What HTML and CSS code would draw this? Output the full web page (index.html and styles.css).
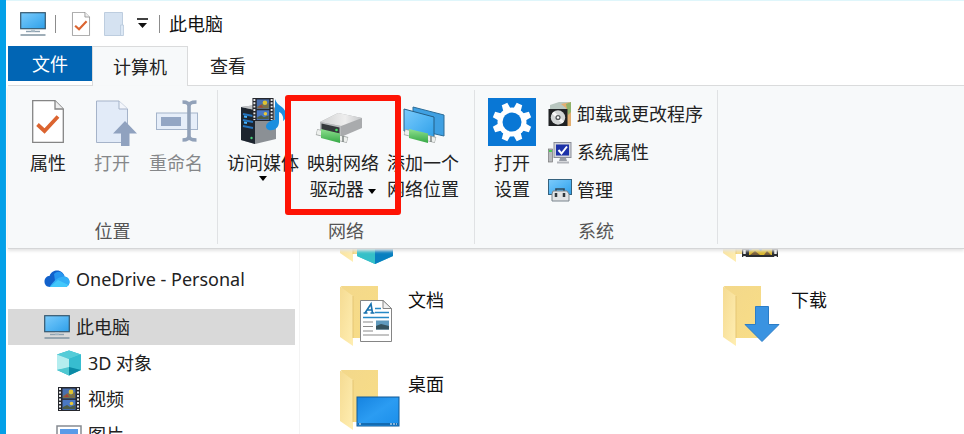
FILE: index.html
```
<!DOCTYPE html>
<html lang="zh-CN">
<head>
<meta charset="UTF-8">
<meta name="viewport" content="width=device-width, initial-scale=1.0">
<title>此电脑</title>
<link rel="stylesheet" href="styles.css">
</head>
<body>

<!-- Shared icon shapes -->
<svg class="defs" aria-hidden="true">
    <defs>
        <linearGradient id="screen" x1="0" y1="0" x2="1" y2="1">
            <stop offset="0" stop-color="#7ccbfb"/>
            <stop offset="0.5" stop-color="#54b6f4"/>
            <stop offset="1" stop-color="#2f9fe8"/>
        </linearGradient>
        <linearGradient id="folderBack" x1="0" y1="0" x2="1" y2="1">
            <stop offset="0" stop-color="#f3d88b"/>
            <stop offset="1" stop-color="#f8dd86"/>
        </linearGradient>
        <linearGradient id="folderFront" x1="0" y1="0" x2="1" y2="1">
            <stop offset="0" stop-color="#f5db92"/>
            <stop offset="1" stop-color="#ffeeb2"/>
        </linearGradient>
        <linearGradient id="desk" x1="0" y1="0" x2="1" y2="1">
            <stop offset="0" stop-color="#1683e0"/>
            <stop offset="0.5" stop-color="#2b9cf2"/>
            <stop offset="1" stop-color="#1a8eea"/>
        </linearGradient>
        <linearGradient id="metal" x1="0" y1="0" x2="1" y2="0">
            <stop offset="0" stop-color="#d0d1d1"/>
            <stop offset="0.6" stop-color="#eeeeee"/>
            <stop offset="1" stop-color="#c4c6c8"/>
        </linearGradient>
        <linearGradient id="cable" x1="0" y1="0" x2="0" y2="1">
            <stop offset="0" stop-color="#8fe08f"/>
            <stop offset="1" stop-color="#35a845"/>
        </linearGradient>
        <symbol id="pc" viewBox="0 0 26 24">
            <rect x="0.7" y="0.7" width="24.6" height="16" fill="url(#screen)" stroke="#35586f" stroke-width="1.2"/>
            <path d="M6 19.5h14" stroke="#8da1b0" stroke-width="1.4"/>
            <path d="M11 17.5h4v2h-4z" fill="#b4c4ce"/>
            <path d="M0.5 23h25" stroke="#7f93a1" stroke-width="1.5"/>
        </symbol>
        <symbol id="cube" viewBox="0 0 26 26">
            <path d="M13 0.5L25 4.5V20L13 25.5L1 20V4.5z" fill="#29b3c6"/>
            <path d="M13 0.5L25 4.5L13 9L1 4.5z" fill="#55ccd8"/>
            <path d="M1 4.5L13 9V18L1 20z" fill="#b4edef"/>
            <path d="M25 4.5L13 9V18L25 20z" fill="#37bdd0"/>
            <path d="M1 20L13 17V25.5z" fill="#4fc8d1"/>
            <path d="M25 20L13 17V25.5z" fill="#0b8ba6"/>
        </symbol>
        <symbol id="film" viewBox="0 0 22 24">
            <rect width="22" height="24" fill="#25272d"/>
            <path d="M2 1v22M20 1v22" stroke="#e6e7e9" stroke-width="2" stroke-dasharray="2 1.5"/>
            <rect x="4.5" y="1.5" width="13" height="10" fill="#496fae"/>
            <rect x="4.5" y="12.8" width="13" height="10" fill="#4a78c4"/>
            <path d="M5 9l5-3 3 2 4-3v6H5z" fill="#7a7048"/>
            <circle cx="13" cy="5" r="2.4" fill="#e0c32f"/>
            <path d="M6 10l3-3 2 3z" fill="#a6413c"/>
            <path d="M5 20l4-2 3 2 5-2v4H5z" fill="#4c5c46"/>
            <circle cx="13.5" cy="16.5" r="1.8" fill="#e8c93a"/>
        </symbol>
        <symbol id="folder" viewBox="0 0 38 60">
            <path d="M1 0h37v52H13z" fill="url(#folderBack)"/>
            <path d="M0 0.5L13 10V60L0 51z" fill="url(#folderFront)"/>
            <path d="M13 10V52" stroke="#e5c674"/>
        </symbol>
        <symbol id="sheet" viewBox="0 0 32 43">
            <path d="M0.7 0.7H23L31.3 9V42.3H0.7z" fill="#fff" stroke="#858585" stroke-width="1.3"/>
            <path d="M23 0.7V9H31.3" fill="#eee" stroke="#858585" stroke-width="1.3"/>
            <path d="M5.5 24.5L12.5 31L26 16.5" fill="none" stroke="#db6430" stroke-width="3.8"/>
        </symbol>
        <symbol id="plug" viewBox="0 0 34 16">
            <path d="M1.5 4L32.5 12" stroke="#a3a8a6" stroke-width="6"/>
            <path d="M2 4L32 12" stroke="#edf0ed" stroke-width="4.500"/>
            <path d="M6 1L25 5.500V15L6 10z" fill="url(#cable)"/>
            <path d="M28 8v6" stroke="#7e8683" stroke-width="1.5"/>
        </symbol>
    </defs>
</svg>

<div class="window">
    <header class="titlebar">
        <svg class="icon-pc" aria-hidden="true"><use href="#pc"/></svg>
        <span class="separator"></span>
        <button type="button" class="quick" aria-label="属性">
            <svg class="icon-sheet" aria-hidden="true"><use href="#sheet"/></svg>
        </button>
        <button type="button" class="quick" aria-label="新建文件夹">
            <svg width="20" height="24" viewBox="0 0 20 24" aria-hidden="true">
                <path d="M0.5 0.5H18.5V23.5H0.5z" fill="#d5e2f1" stroke="#bdcddf"/>
                <path d="M16.5 13h3v10.5h-3z" fill="#dce8f5" stroke="#b9c9dc" stroke-width="0.8"/>
            </svg>
        </button>
        <button type="button" class="quick" aria-label="自定义快速访问工具栏">
            <svg width="11" height="11" viewBox="0 0 11 11" aria-hidden="true">
                <path d="M0 1h11" stroke="#111" stroke-width="1.6"/>
                <path d="M1 5h9L5.5 10z" fill="#111"/>
            </svg>
        </button>
        <span class="separator"></span>
        <h1>此电脑</h1>
    </header>

    <nav class="tabs">
        <button type="button" class="tab file">文件</button>
        <button type="button" class="tab active">计算机</button>
        <button type="button" class="tab">查看</button>
    </nav>

    <div class="ribbon">
        <section class="group location">
            <div class="tools">
                <button type="button" class="tool">
                    <svg width="32" height="48" viewBox="0 0 32 48" aria-hidden="true"><use href="#sheet" y="2" width="32" height="43"/></svg>
                    <span>属性</span>
                </button>
                <button type="button" class="tool" disabled>
                    <svg width="42" height="48" viewBox="0 0 42 48" aria-hidden="true">
                        <path d="M5.5 3H28L36.500 11V44.5H5.5z" fill="#e2ebf8" stroke="#a5b3c9"/>
                        <path d="M28 3V11H36.5" fill="#f3f6fb" stroke="#a5b3c9"/>
                        <path d="M34 23L46 35.5H38.500V48H30V35.5H22z" fill="#90a2bf"/>
                    </svg>
                    <span>打开</span>
                </button>
                <button type="button" class="tool" disabled>
                    <svg width="44" height="48" viewBox="0 0 44 48" aria-hidden="true">
                        <rect x="2.5" y="15" width="41" height="16.5" fill="#e6eef9" stroke="#a4b4ca"/>
                        <rect x="7" y="19" width="20" height="9" fill="#93a6c4"/>
                        <path d="M28.5 4C32 4 35 5 35 8V38C35 41 32 42 28.5 42M42.5 4C39 4 35 5 35 8M35 38C35 41 39 42 42.5 42" fill="none" stroke="#92a2b9" stroke-width="3.6"/>
                    </svg>
                    <span>重命名</span>
                </button>
            </div>
            <h2>位置</h2>
        </section>

        <section class="group network">
            <div class="tools">
                <button type="button" class="tool">
                    <svg width="48" height="48" viewBox="0 0 48 48" aria-hidden="true">
                        <path d="M2 9L24 6L37 10V41L16 46L2 42z" fill="#8b9095"/>
                        <path d="M2 9L16 12V46L2 42z" fill="#1d252f"/>
                        <path d="M2 9L24 6L37 10L16 12z" fill="#c0c3c6"/>
                        <path d="M4 16L14 18M4 22L14 24M4 28L14 30" stroke="#2473bd" stroke-width="2"/>
                        <path d="M5 18.5l3 0.5M5 24.5l3 0.5" stroke="#47b4ff" stroke-width="2"/>
                        <circle cx="12.5" cy="40" r="1.2" fill="#48cf78"/>
                        <use href="#film" x="13" y="0" width="22" height="23"/>
                        <path d="M36 1C38 8 45 8 47 15C48 19 45 23 44 23C45 19 43 15 40 14V24C40 30 35 33 30 32C26 31 26 26 30 24C32 22 34 22 36 22z" fill="#1b8edf"/>
                    </svg>
                    <span>访问媒体</span>
                    <svg class="caret" viewBox="0 0 8 5" aria-hidden="true"><path d="M0 0h8L4 5z"/></svg>
                </button>
                <button type="button" class="tool highlighted">
                    <svg width="48" height="48" viewBox="0 0 48 48" aria-hidden="true">
                        <path d="M1 24L19 15L43 20V30L22 39L1 32z" fill="#a9abad"/>
                        <path d="M1 24L19 15L43 20L22 28z" fill="url(#metal)"/>
                        <path d="M1 24L22 28V38L1 33z" fill="#b9bbbd"/>
                        <path d="M2.500 25.500L20.500 29.5V36L2.500 32z" fill="#35393b"/>
                        <circle cx="17.5" cy="32" r="1.3" fill="#43df61"/>
                        <use href="#plug" x="-4" y="30" width="34" height="16"/>
                    </svg>
                    <span>映射网络<br>驱动器 <svg class="caret" viewBox="0 0 8 5" aria-hidden="true"><path d="M0 0h8L4 5z"/></svg></span>
                </button>
                <button type="button" class="tool">
                    <svg width="48" height="48" viewBox="0 0 48 48" aria-hidden="true">
                        <path d="M14 9L45 17V38L14 31z" fill="#3fa0e2" stroke="#2d6d97"/>
                        <path d="M5 11L35 19V40L5 33z" fill="url(#screen)" stroke="#245e85"/>
                        <use href="#plug" x="4" y="30" width="34" height="16"/>
                    </svg>
                    <span>添加一个<br>网络位置</span>
                </button>
            </div>
            <h2>网络</h2>
        </section>

        <section class="group system">
            <div class="tools">
                <button type="button" class="tool narrow">
                    <svg width="48" height="48" viewBox="0 0 48 48" aria-hidden="true">
                        <rect width="48" height="48" fill="#0977d5"/>
                        <g transform="translate(24 24)" fill="#fff">
                            <g id="teeth">
                                <path id="tooth" d="M-4 -12L-3 -19.5H3L4 -12z" transform="rotate(22.5)"/>
                                <use href="#tooth" transform="rotate(45)"/>
                                <use href="#tooth" transform="rotate(90)"/>
                                <use href="#tooth" transform="rotate(135)"/>
                            </g>
                            <use href="#teeth" transform="rotate(180)"/>
                            <circle r="14.5"/>
                            <circle r="9.5" fill="#0977d5"/>
                        </g>
                    </svg>
                    <span>打开<br>设置</span>
                </button>
                <ul class="commands">
                    <li>
                        <button type="button">
                            <svg width="24" height="26" viewBox="0 0 24 26" aria-hidden="true">
                                <path d="M2 4L11 1H21V8H2z" fill="#b9c7c0"/>
                                <path d="M13 3L23 1V25H18V7z" fill="#e3ae70"/>
                                <path d="M18 3l5-2v10l-3 3z" fill="#8fb26b"/>
                                <rect x="0.5" y="8" width="19" height="17" fill="#202224"/>
                                <circle cx="10" cy="16.5" r="7.2" fill="#d3d6d6"/>
                                <path d="M10 16.5L5 11.5M10 16.5L15 21.5" stroke="#f7f7f7" stroke-width="3"/>
                                <circle cx="10" cy="16.5" r="2.6" fill="#55595b"/>
                                <circle cx="10" cy="16.5" r="1.2" fill="#fff"/>
                            </svg>
                            卸载或更改程序
                        </button>
                    </li>
                    <li>
                        <button type="button">
                            <svg width="24" height="26" viewBox="0 0 24 26" aria-hidden="true">
                                <rect x="0.5" y="10" width="4" height="13" fill="#b8bbbe" stroke="#777" stroke-width="0.7"/>
                                <path d="M1 12h3" stroke="#4bcc54" stroke-width="2"/>
                                <rect x="6" y="3.5" width="17" height="15" fill="#d2d4da" stroke="#8b8f99"/>
                                <rect x="8" y="5.5" width="13" height="11" fill="#1d32a8"/>
                                <path d="M10.5 11l3 3.5L19 7.5" fill="none" stroke="#fff" stroke-width="2"/>
                                <path d="M12 19h6l1 3H11z" fill="#999da5"/>
                                <path d="M9 23.5h12" stroke="#b2b5bb" stroke-width="2"/>
                            </svg>
                            系统属性
                        </button>
                    </li>
                    <li>
                        <button type="button">
                            <svg width="24" height="26" viewBox="0 0 24 26" aria-hidden="true">
                                <rect x="0.5" y="2.5" width="23" height="15" fill="url(#screen)" stroke="#35627e"/>
                                <path d="M8 14v-2h8v2" fill="none" stroke="#30495b" stroke-width="1.6"/>
                                <path d="M5 14H19L21 17V24H4V17z" fill="#e1e4e6" stroke="#7b858d"/>
                                <path d="M8 16v4M16 16v4" stroke="#31383e" stroke-width="2.5"/>
                            </svg>
                            管理
                        </button>
                    </li>
                </ul>
            </div>
            <h2>系统</h2>
        </section>
    </div>

    <div class="content">
        <nav class="sidebar">
            <a href="#onedrive" class="onedrive">
                <svg width="26" height="26" viewBox="0 0 26 26" aria-hidden="true">
                    <path d="M6 21C2 21 0.5 18 0.5 15.5C0.5 12 3 10 5.5 10C7 6 10 4.5 13 4.5C17 4.5 19.5 7 20.5 10L10 21z" fill="#1261cb"/>
                    <path d="M10 8C14 4 19 6 20.5 10.5C24 11 25.5 13.5 25.5 16C25.5 19 23 21 20.5 21H12z" fill="#2796ef"/>
                    <path d="M5.5 20.8C9 17 12 11 20 10.6C24 11 25.5 13.5 25.5 16C25.5 19 23 21 20.5 21H6.5z" fill="#32aef6"/>
                    <path d="M6 21L14 14L24.5 19C23.5 20.5 22 21 20.5 21z" fill="#43c8fb"/>
                </svg>
                OneDrive - Personal
            </a>
            <a href="#pc-root" class="selected">
                <svg class="icon-pc" aria-hidden="true"><use href="#pc"/></svg>
                此电脑
            </a>
            <a href="#objects" class="child">
                <svg width="26" height="26" aria-hidden="true"><use href="#cube"/></svg>
                3D 对象
            </a>
            <a href="#videos" class="child">
                <svg width="26" height="24" aria-hidden="true"><use href="#film"/></svg>
                视频
            </a>
            <a href="#pictures" class="child">
                <svg width="26" height="20" viewBox="0 0 26 20" aria-hidden="true">
                    <rect x="1" y="1" width="24" height="18" fill="#fff" stroke="#868b91" stroke-width="1.5"/>
                    <rect x="4" y="4" width="18" height="12" fill="#5a9be8"/>
                    <path d="M4 14l6-3 6 3 6-2v4H4z" fill="#3d7a52"/>
                </svg>
                图片
            </a>
        </nav>

        <main class="folders">
            <a href="#objects" aria-label="3D 对象">
                <svg width="60" height="60" viewBox="0 0 60 60" aria-hidden="true">
                    <use href="#folder" width="38" height="60"/>
                    <path d="M35 19L53 26V54L35 62L17 54V26z" fill="#35bccb"/>
                    <path d="M17 50L35 44V62L17 54z" fill="#35c0c8"/>
                    <path d="M53 26L35 46V62L53 54z" fill="#087fc0"/>
                </svg>
            </a>
            <a href="#videos" aria-label="视频">
                <svg width="60" height="60" viewBox="0 0 60 60" aria-hidden="true">
                    <use href="#folder" width="38" height="60"/>
                    <rect x="19" y="16" width="36" height="39" fill="#2b2d31"/>
                    <path d="M21.5 18v37M52.5 18v37" stroke="#eee" stroke-width="2.5" stroke-dasharray="4 2"/>
                    <rect x="26" y="37" width="23" height="16" fill="#447bb8"/>
                    <path d="M26 53v-4l7-4 5 4 3-5 8 3v6z" fill="#d9b72e"/>
                    <path d="M27 53l5-4 5 4zM41 53l3-4 4 4z" fill="#775b35"/>
                </svg>
            </a>
            <a href="#documents">
                <svg width="60" height="60" viewBox="0 0 60 60" aria-hidden="true">
                    <use href="#folder" width="38" height="60"/>
                    <path d="M20.5 14.5H43L51.5 22.5V55.5H20.5z" fill="#fff" stroke="#858585"/>
                    <path d="M43 14.5V22.5H51.5z" fill="#f1f1f1" stroke="#858585"/>
                    <path d="M25 27L31 18L32.5 27M27.5 24H32M23.5 27h4M30.5 27h4" fill="none" stroke="#1972af" stroke-width="1.6"/>
                    <path d="M35 22.5h6M35 26.5h14M23 31.5h26" stroke="#2689c6" stroke-width="1.5"/>
                    <path d="M23 36h10M23 40.5h10M23 45h10M23 49h26" stroke="#8a8a8a" stroke-width="1.2"/>
                    <rect x="36" y="34.5" width="13" height="9" fill="#5f9abd"/>
                    <path d="M36 40l5-2 8 2v3.5H36z" fill="#35535e"/>
                </svg>
                文档
            </a>
            <a href="#downloads">
                <svg width="60" height="60" viewBox="0 0 60 60" aria-hidden="true">
                    <use href="#folder" width="38" height="60"/>
                    <path d="M32.5 20.5H45.5V38.5H56L39 55.5L22 38.5H32.5z" fill="#3a93e1" stroke="#2b7dc7"/>
                </svg>
                下载
            </a>
            <a href="#desktop">
                <svg width="60" height="60" viewBox="0 0 60 60" aria-hidden="true">
                    <use href="#folder" width="38" height="60"/>
                    <rect x="17" y="27" width="42" height="29" fill="url(#desk)" stroke="#115a98"/>
                    <path d="M18 54h40" stroke="#0f5c9c" stroke-width="1.5"/>
                    <path d="M19 54h2M50 54h2M53 54h2M56 54h1" stroke="#fff" stroke-width="1.2"/>
                </svg>
                桌面
            </a>
        </main>
    </div>
</div>

</body>
</html>
```
FILE: styles.css
```
*,
*::after {
    box-sizing: border-box;
}
body {
    margin: 0;
    height: 100vh;
    overflow: hidden;
    background-color: #03a0e8;
    color: #222;
    font-family: "Noto Sans", "Noto Sans CJK SC", sans-serif;
    font-size: 18px;
    line-height: 26px;
}
button {
    padding: 0;
    border: none;
    background: none;
    color: inherit;
    font: inherit;
    cursor: pointer;
}
a {
    color: inherit;
    text-decoration: none;
}
h1,
h2 {
    margin: 0;
    font-size: 18px;
    font-weight: normal;
}
svg {
    flex-shrink: 0;
    overflow: visible;
}
.defs {
    position: absolute;
    width: 0;
    height: 0;
}
.window {
    display: flex;
    flex-direction: column;
    height: 100%;
    margin-left: 6px;
    padding-left: 2px;
    border-top: 1px solid #dff6fb;
    background-color: #fff;
}

/* Title bar */
.titlebar {
    display: flex;
    align-items: center;
    height: 45px;
    padding-left: 12px;
    gap: 9px;
}
.titlebar h1 {
    color: #111;
}
.icon-pc {
    width: 26px;
    height: 24px;
}
.icon-sheet {
    width: 20px;
    height: 24px;
}
.separator {
    width: 1px;
    height: 18px;
    background-color: #8c8c8c;
}
.quick {
    display: flex;
    padding: 0 2px;
}
.separator + .quick {
    margin-left: 4px;
}

/* Tabs */
.tabs {
    display: flex;
    height: 40px;
    border-bottom: 1px solid #dadbdc;
}
.tab {
    padding: 0 22px;
}
.tab.file {
    height: 35px;
    padding: 0 24px;
    background-color: #0165b4;
    color: #fff;
}
.tab.active {
    height: 40px;
    padding: 0 20px;
    border: 1px solid #dadbdc;
    border-bottom: none;
    background-color: #f7f9fa;
}

/* Ribbon */
.ribbon {
    position: relative;
    display: flex;
    flex-shrink: 0;
    padding: 4px 0;
    border-bottom: 1px solid #d5d6d7;
    background-color: #f7f9fa;
    box-shadow: 0 2px 3px #e4e4e4;
}
.group {
    display: flex;
    flex-direction: column;
    justify-content: space-between;
    border-right: 1px solid #e0e2e4;
}
.group h2 {
    color: #555;
    text-align: center;
}
.tools {
    display: flex;
    height: 128px;
    padding: 8px 9px 0 8px;
}
.network .tools {
    padding: 8px 11px 0 5px;
}
.system .tools {
    padding: 8px 14px 0 13px;
    gap: 12px;
}
.tool {
    display: flex;
    flex-direction: column;
    align-items: center;
    width: 64px;
    white-space: nowrap;
}
.network .tool {
    width: 80px;
}
.tool.narrow {
    width: 48px;
}
.tool > span {
    margin-top: 4px;
}
.tool:disabled {
    color: #858789;
}
.caret {
    width: 8px;
    height: 5px;
    vertical-align: middle;
}
.highlighted {
    position: relative;
}
.highlighted::after {
    content: "";
    position: absolute;
    top: -3px;
    left: -18px;
    width: 116px;
    height: 120px;
    border: 6px solid #fe1405;
    border-radius: 3px;
}
.commands {
    display: flex;
    flex-direction: column;
    gap: 12px;
    margin: 0;
    padding: 3px 0 0;
    list-style: none;
}
.commands button {
    display: flex;
    gap: 5px;
}

/* Navigation pane and folder list */
.content {
    display: flex;
    flex: 1;
    min-height: 0;
    overflow: hidden;
}
.sidebar {
    width: 292px;
    padding: 12px 4px 0 0;
    border-right: 1px solid #f3f3f3;
}
.sidebar a {
    display: flex;
    align-items: center;
    height: 36px;
    padding-left: 36px;
    gap: 6px;
}
.sidebar .onedrive {
    margin-bottom: 12px;
}
.sidebar .child {
    padding-left: 48px;
}
.sidebar .selected {
    background-color: #d9d9d9;
}
.folders {
    display: grid;
    flex: 1;
    grid-template-columns: 383px 1fr;
    grid-auto-rows: 84px;
    margin-top: -47px;
    padding-left: 40px;
    color: #111;
    line-height: 28px;
}
.folders a {
    display: flex;
    gap: 8px;
}
```
